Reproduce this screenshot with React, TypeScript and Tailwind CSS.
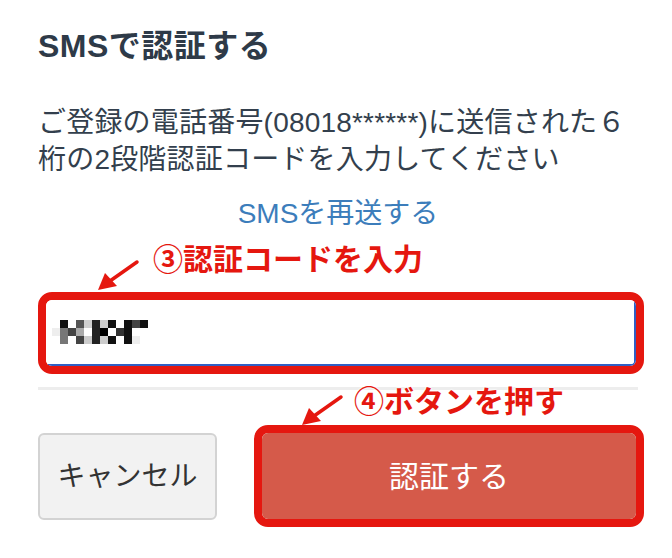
import React from "react";

const RED = "#e5170f";

// mosaic values for the blurred code (3 rows x 12 cols)
const MOSAIC: string[][] = [
  ["#fff", "#111", "#fff", "#555", "#d0d0d0", "#222", "#ccc", "#111", "#fff", "#111", "#444", "#111"],
  ["#eee", "#777", "#444", "#aaa", "#fff", "#222", "#000", "#fff", "#333", "#111", "#fff", "#fff"],
  ["#fff", "#777", "#fff", "#444", "#ccc", "#222", "#ccc", "#111", "#fff", "#111", "#eee", "#fff"],
];

function Arrow({ className }: { className?: string }) {
  // tail at upper right, tip at lower left
  return (
    <svg className={className} width="44" height="34" viewBox="0 0 44 34" fill="none">
      <line x1="41" y1="3" x2="14" y2="22" stroke={RED} strokeWidth="3.5" strokeLinecap="round" />
      <polygon points="2,31 9,14 21,27" fill={RED} />
    </svg>
  );
}

export default function App() {
  return (
    <div
      className="relative w-[672px] h-[558px] bg-white overflow-hidden"
      style={{ fontFamily: '"Liberation Sans", "Noto Sans CJK JP", sans-serif' }}
    >
      <div className="pl-[38px] w-[644px] flex flex-col">
        <h1 className="pt-[26px] text-[32px] leading-[40px] font-bold tracking-[0.5px] text-[#2e3a48]">SMSで認証する</h1>

        <p className="mt-[38px] text-[28px] leading-[37px] tracking-[0.2px] text-[#333f4d] w-[600px]">
          ご登録の電話番号(08018******)に送信された６
          <br />
          桁の2段階認証コードを入力してください
        </p>

        <div className="mt-[20px] w-[600px] text-center text-[28px] leading-[32px] text-[#3c7dbb]">
          SMSを再送する
        </div>

        {/* input, with the red annotation frame */}
        <div className="relative mt-[62px] w-[606px]">
          <div className="absolute left-[115px] -top-[47px] whitespace-nowrap text-[30px] leading-[30px] font-bold text-[#e5170f] [text-shadow:0_0_2px_#fff,0_0_2px_#fff]">
            ③認証コードを入力
          </div>
          <Arrow className="absolute left-[58px] -top-[33px]" />
          <div className="rounded-[14px] border-[8px] border-[#e5170f] overflow-hidden">
            <div className="h-[66px] bg-white border-b-2 border-r-2 border-[#2f5fc4] rounded-br-[4px] flex items-center pl-[6px]">
              <svg width="96" height="24" viewBox="0 0 96 24">
                {MOSAIC.map((row, r) =>
                  row.map((c, i) => <rect key={`${r}-${i}`} x={i * 8} y={r * 8} width="8" height="8" fill={c} />)
                )}
              </svg>
            </div>
          </div>
        </div>

        <div className="mt-[13px] h-[3px] w-[600px] bg-[#ededed]" />

        <div className="relative mt-[35px] flex items-start">
          <div className="absolute left-[316px] -top-[38px] whitespace-nowrap text-[30px] leading-[30px] font-bold text-[#e5170f] [text-shadow:0_0_2px_#fff,0_0_2px_#fff,0_0_3px_#fff]">
            ④ボタンを押す
          </div>
          <Arrow className="absolute left-[262px] -top-[31px]" />
          <button className="mt-[8px] w-[179px] h-[87px] rounded-[6px] border-2 border-[#d3d3d3] bg-[#f2f2f2] text-[28px] text-[#333]">
            キャンセル
          </button>
          <div className="ml-[37px] w-[390px] rounded-[14px] border-[8px] border-[#e5170f] overflow-hidden">
            <button className="w-full h-[86px] bg-[#d55a4a] text-[30px] text-white">認証する</button>
          </div>
        </div>
      </div>
    </div>
  );
}
